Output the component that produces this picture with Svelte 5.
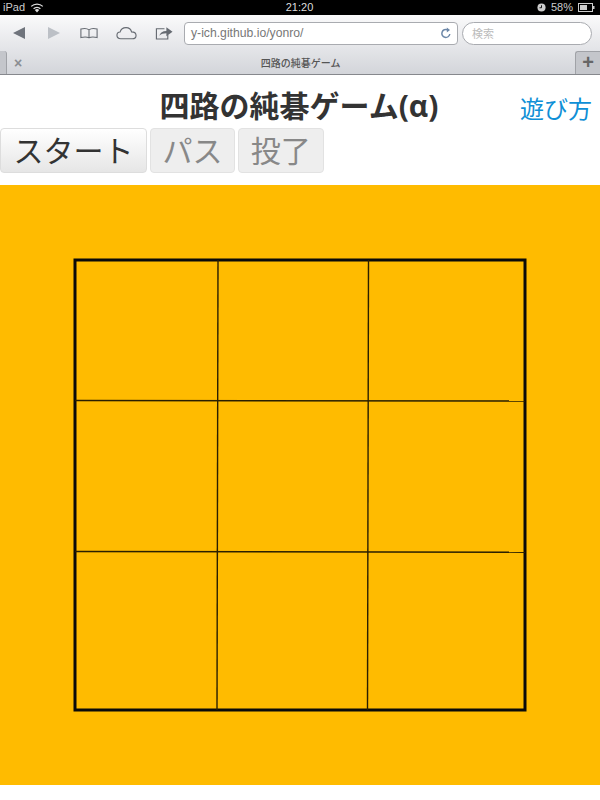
<script>
	const lines = [
		[218, 75, 217, 525],
		[368.5, 75, 367.5, 525],
		[75, 215.5, 525, 216],
		[75, 366.5, 525, 367.2]
	];
</script>

<div class="page">
	<div class="statusbar">
		<div class="status-left">
			<span>iPad</span>
			<svg class="wifi" viewBox="0 0 14 10" width="14" height="10">
				<path d="M7 9.5 4.8 7a3.2 3.2 0 0 1 4.4 0z" fill="#ddd" />
				<path d="M3.6 5.8a5 5 0 0 1 6.8 0" fill="none" stroke="#ddd" stroke-width="1.3" />
				<path d="M1.2 3.4a8.4 8.4 0 0 1 11.6 0" fill="none" stroke="#ddd" stroke-width="1.3" />
			</svg>
		</div>
		<span class="clock">21:20</span>
		<div class="status-right">
			<svg viewBox="0 0 10 10" width="9" height="9">
				<circle cx="5" cy="5" r="4.5" fill="#ccc" />
				<path d="M5 2.5V5.3H2.8" fill="none" stroke="#000" stroke-width="1" />
			</svg>
			<span>58%</span>
			<svg viewBox="0 0 17 9" width="17" height="9">
				<rect x=".5" y=".5" width="14" height="8" fill="none" stroke="#ccc" />
				<rect x="2" y="2" width="7" height="5" fill="#ccc" />
				<rect x="15" y="3" width="1.5" height="3" fill="#ccc" />
			</svg>
		</div>
	</div>

	<div class="chrome">
		<div class="toolbar">
			<svg class="tool back" viewBox="0 0 14 14" width="14" height="14"><path d="M1 7 13 1V13z" fill="#6f747c" /></svg>
			<svg class="tool forward" viewBox="0 0 14 14" width="14" height="14"><path d="M13 7 1 1V13z" fill="#bcc0c6" /></svg>
			<svg class="tool book" viewBox="0 0 20 12" width="20" height="12">
				<path d="M10 2.5C8 .8 4 .8 1 1.5V11C4 10.300 8 10.300 10 11.300 12 10.300 16 10.300 19 11V1.500C16 .8 12 .8 10 2.500ZM10 2.500V11.300" fill="none" stroke="#666b72" stroke-width="1.200" />
			</svg>
			<svg class="tool cloud" viewBox="0 0 22 14" width="22" height="14">
				<path d="M5 13C2.500 13 1 11.300 1 9.300 1 7.300 2.500 6 4.300 5.900 5 3.300 7.500 1.300 10.500 1.300 13.500 1.300 15.800 3.300 16.300 5.800 19 5.900 21 7.300 21 9.500 21 11.500 19.300 13 17 13z" fill="none" stroke="#666b72" stroke-width="1.200" />
			</svg>
			<svg class="tool share" viewBox="0 0 19 14" width="19" height="14">
				<path d="M10 2.500H1.500V13.300H13.500V9" fill="none" stroke="#666b72" stroke-width="1.200" />
				<path d="M4.500 10C5.500 6.500 8 4.800 12 4.800V1L18.500 5.800 12 10.500V7.300C9 7.300 6.500 8 4.500 10Z" fill="#666b72" />
			</svg>
			<div class="address">
				<span>y-ich.github.io/yonro/</span>
				<svg viewBox="0 0 12 12" width="12" height="12">
					<path d="M9.800 7A4 4 0 1 1 7.500 2.800" fill="none" stroke="#6c87a8" stroke-width="1.500" />
					<path d="M6.800.5 10 3 6.800 5.500z" fill="#6c87a8" />
				</svg>
			</div>
			<div class="search">検索</div>
		</div>
		<div class="tabs">
			<div class="tab-edge"></div>
			<span class="tab-close">×</span>
			<span class="tab-title">四路の純碁ゲーム</span>
			<div class="tab-add">+</div>
		</div>
	</div>

	<header class="heading">
		<h1>四路の純碁ゲーム(α)</h1>
		<a href="#help" class="help">遊び方</a>
	</header>

	<div class="buttons">
		<button class="start">スタート</button>
		<button disabled>パス</button>
		<button disabled>投了</button>
	</div>

	<div class="board">
		<svg viewBox="0 0 600 600" width="600" height="600">
			<rect x="75" y="75" width="450" height="450" fill="none" stroke="#0a0a0a" stroke-width="3" />
			{#each lines as [x1, y1, x2, y2]}
				<line {x1} {y1} {x2} {y2} stroke="#2a1f00" stroke-width="1.400" />
			{/each}
		</svg>
	</div>
</div>

<style>
	:global(body) {
		background: #fff;
	}

	.page {
		width: 600px;
		height: 800px;
		overflow: hidden;
		font-family: 'Open Sans', 'Noto Sans CJK JP', sans-serif;
		background: #fff;
	}

	.statusbar {
		height: 15px;
		background: #000;
		color: #ccc;
		font-family: 'Liberation Sans', 'Noto Sans CJK JP', sans-serif;
		font-size: 11px;
		line-height: 15px;
		display: grid;
		grid-template-columns: 1fr auto 1fr;
		padding: 0 5px 0 3px;
		box-sizing: border-box;
	}

	.status-left,
	.status-right {
		display: flex;
		align-items: center;
		gap: 5px;
	}

	.status-right {
		justify-content: flex-end;
	}

	.clock {
		color: #ddd;
		padding-left: 1px;
	}

	.chrome {
		height: 60px;
		box-sizing: border-box;
		border-bottom: 1px solid #86888d;
		border-radius: 4px 4px 0 0;
		background: linear-gradient(#fafafb, #d3d5da);
	}

	.toolbar {
		height: 36px;
		display: flex;
		align-items: center;
		padding: 0 9px 0 12px;
		box-sizing: border-box;
	}

	.tool {
		flex: none;
	}

	.forward {
		margin-left: 21px;
	}

	.book {
		margin-left: 19px;
		width: 18px;
	}

	.cloud {
		margin-left: 18px;
		width: 21px;
	}

	.share {
		margin-left: 18px;
		width: 18px;
	}

	.address {
		width: 274px;
		height: 23px;
		margin-left: 11px;
		flex: none;
		box-sizing: border-box;
		padding: 0 5px 0 6px;
		display: flex;
		align-items: center;
		justify-content: space-between;
		background: #fff;
		border: 1px solid #a9abb0;
		border-radius: 4px;
		color: #777;
		font-family: 'Liberation Sans', sans-serif;
		font-size: 12.200px;
	}

	.search {
		width: 130px;
		height: 23px;
		margin-left: 4px;
		flex: none;
		box-sizing: border-box;
		padding-left: 9px;
		line-height: 21px;
		background: #fff;
		border: 1px solid #a9abb0;
		border-radius: 12px;
		color: #bbb;
		font-size: 11px;
	}

	.tabs {
		height: 23px;
		display: flex;
		align-items: center;
		position: relative;
	}

	.tab-edge {
		width: 7px;
		height: 23px;
		background: #c4c6cb;
		border-right: 1px solid #a0a2a7;
		border-radius: 0 3px 0 0;
		box-sizing: border-box;
	}

	.tab-close {
		margin-left: 7px;
		color: #8b8d92;
		font-family: 'Liberation Sans', sans-serif;
		font-size: 14px;
		font-weight: bold;
	}

	.tab-title {
		flex: 1;
		text-align: center;
		font-size: 10px;
		font-weight: 500;
		color: #555;
		padding-left: 4px;
	}

	.tab-add {
		width: 25px;
		height: 23px;
		box-sizing: border-box;
		background: #c4c6cb;
		border-left: 1px solid #a0a2a7;
		border-top: 1px solid #a0a2a7;
		border-radius: 3px 0 0 0;
		color: #666;
		font-family: 'Liberation Sans', sans-serif;
		font-size: 20px;
		font-weight: bold;
		line-height: 20px;
		text-align: center;
	}

	.heading {
		height: 53px;
		position: relative;
		display: flex;
		align-items: center;
		justify-content: center;
		padding-top: 5px;
		padding-right: 2px;
		box-sizing: border-box;
	}

	h1 {
		margin: 0;
		font-size: 30px;
		font-weight: 700;
		color: #333;
		font-family: 'Open Sans', 'Noto Sans CJK JP', sans-serif;
	}

	.help {
		position: absolute;
		right: 8px;
		top: 19px;
		font-size: 24px;
		line-height: 30px;
		color: #0f8fd6;
		text-decoration: none;
	}

	.buttons {
		display: flex;
		gap: 3px;
		height: 45px;
	}

	button {
		height: 45px;
		padding: 0 11.700px;
		box-sizing: border-box;
		font-family: 'Open Sans', 'Noto Sans CJK JP', sans-serif;
		font-size: 30px;
		line-height: 1;
		border: 1px solid #e2e2e2;
		border-radius: 4px;
		background: #eee;
		color: #888;
	}

	.start {
		padding: 0 12.400px;
		background: linear-gradient(#fff, #e6e6e6);
		color: #333;
		border-color: #ddd;
	}

	.board {
		margin-top: 12px;
		height: 600px;
		background: #ffbb00;
	}

	.board svg {
		display: block;
	}
</style>
